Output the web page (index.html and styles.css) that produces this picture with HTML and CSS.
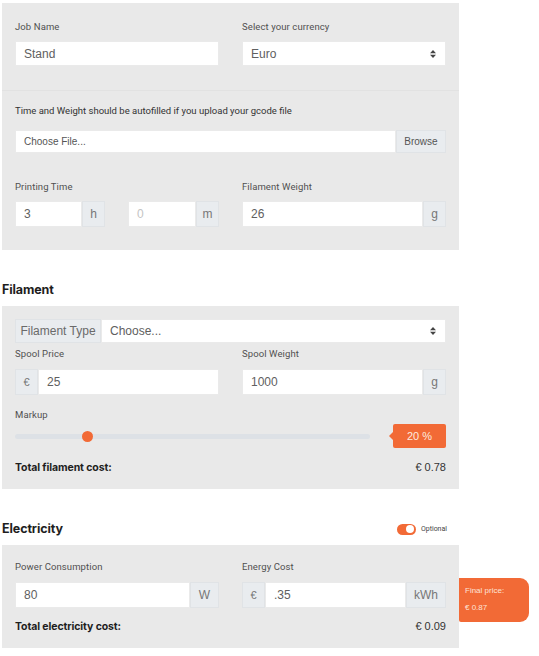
FILE: index.html
```html
<!DOCTYPE html>
<html>
<head>
<meta charset="utf-8">
<link rel="stylesheet" href="styles.css">
</head>
<body>
<div class="panel panel-job">
  <div class="section sec-top">
    <div class="cols">
      <div class="field">
        <div class="label">Job Name</div>
        <div class="input"><span class="val">Stand</span></div>
      </div>
      <div class="field">
        <div class="label">Select your currency</div>
        <div class="input select"><span class="val">Euro</span>
          <svg class="arrows" width="6" height="8" viewBox="0 0 6 8"><path d="M0 3.3L3 0L6 3.3Z M0 4.7L3 8L6 4.7Z" fill="#444"/></svg>
        </div>
      </div>
    </div>
  </div>
  <div class="section sec-bottom">
    <div class="note">Time and Weight should be autofilled if you upload your gcode file</div>
    <div class="group file">
      <div class="input grow"><span class="val small">Choose File...</span></div>
      <div class="addon browse">Browse</div>
    </div>
    <div class="cols cols-time">
      <div class="field">
        <div class="label">Printing Time</div>
        <div class="time-pair">
          <div class="group">
            <div class="input grow"><span class="val">3</span></div>
            <div class="addon unit">h</div>
          </div>
          <div class="group">
            <div class="input grow"><span class="val placeholder">0</span></div>
            <div class="addon unit">m</div>
          </div>
        </div>
      </div>
      <div class="field">
        <div class="label">Filament Weight</div>
        <div class="group">
          <div class="input grow"><span class="val">26</span></div>
          <div class="addon unit">g</div>
        </div>
      </div>
    </div>
  </div>
</div>

<div class="heading-row heading-fil"><h2 class="heading">Filament</h2></div>
<div class="panel panel-fil">
  <div class="group type-group">
    <div class="addon type-addon">Filament Type</div>
    <div class="input grow select"><span class="val">Choose...</span>
      <svg class="arrows" width="6" height="8" viewBox="0 0 6 8"><path d="M0 3.3L3 0L6 3.3Z M0 4.7L3 8L6 4.7Z" fill="#444"/></svg>
    </div>
  </div>
  <div class="cols cols-spool">
    <div class="field">
      <div class="label">Spool Price</div>
      <div class="group tall">
        <div class="addon cur">€</div>
        <div class="input grow"><span class="val">25</span></div>
      </div>
    </div>
    <div class="field">
      <div class="label">Spool Weight</div>
      <div class="group tall">
        <div class="input grow"><span class="val">1000</span></div>
        <div class="addon unit">g</div>
      </div>
    </div>
  </div>
  <div class="label markup-label">Markup</div>
  <div class="slider-row">
    <div class="track"><div class="thumb" style="left: 20.5%"></div></div>
    <div class="badge">20 %</div>
  </div>
  <div class="total-row">
    <span class="total-label">Total filament cost:</span>
    <span class="total-val">€ 0.78</span>
  </div>
</div>

<div class="heading-row heading-el">
  <h2 class="heading">Electricity</h2>
  <div class="toggle-wrap"><span class="toggle"><span class="knob"></span></span><span class="opt">Optional</span></div>
</div>
<div class="panel panel-el">
  <div class="cols">
    <div class="field">
      <div class="label">Power Consumption</div>
      <div class="group tall">
        <div class="input grow"><span class="val">80</span></div>
        <div class="addon watt">W</div>
      </div>
    </div>
    <div class="field">
      <div class="label">Energy Cost</div>
      <div class="group tall">
        <div class="addon cur">€</div>
        <div class="input grow"><span class="val">.35</span></div>
        <div class="addon kwh">kWh</div>
      </div>
    </div>
  </div>
  <div class="total-row el-total">
    <span class="total-label">Total electricity cost:</span>
    <span class="total-val">€ 0.09</span>
  </div>
  <div class="final">
    <div class="final-t">Final price:</div>
    <div class="final-v">€ 0.87</div>
  </div>
</div>
</body>
</html>
```

FILE: styles.css
```css
html, body { margin: 0; padding: 0; background: #fff; }
body {
  font-family: Roboto, "Liberation Sans", Arial, sans-serif;
  color: #444;
  width: 539px;
  height: 656px;
  overflow: hidden;
}
.panel {
  background: #e9e9e9;
  margin-left: 2px;
  width: 457px;
  box-sizing: border-box;
  position: relative;
}
.panel-job { margin-top: 3px; }
.section { padding: 0 13px; }
.sec-top {
  padding-top: 17px;
  padding-bottom: 24px;
  border-bottom: 1px solid #e2e2e2;
}
.sec-bottom { padding-top: 13px; padding-bottom: 23px; }
.cols {
  display: grid;
  grid-template-columns: 204px 204px;
  column-gap: 23px;
}
.label {
  font-size: 9.5px;
  line-height: 14px;
  color: #505050;
  letter-spacing: 0.1px;
  margin-bottom: 7px;
}
.input {
  background: #fff;
  height: 25px;
  box-sizing: border-box;
  border: 1px solid #eaeaea;
  display: flex;
  align-items: center;
  padding-left: 8px;
  padding-right: 9px;
  font-family: "Liberation Sans", Arial, sans-serif;
  font-size: 12px;
  color: #606060;
}
.val.small { font-size: 10px; color: #555; }
.val.placeholder { color: #c4c4c4; }
.select { justify-content: space-between; }
.arrows { display: block; }
.note {
  font-size: 9.5px;
  line-height: 14px;
  color: #333;
  margin-bottom: 12px;
}
.group { display: flex; height: 23px; }
.group .input { height: 100%; }
.grow { flex: 1; min-width: 0; }
.addon {
  background: #e9ecef;
  border: 1px solid #e0e3e6;
  box-sizing: border-box;
  height: 100%;
  display: flex;
  align-items: center;
  justify-content: center;
  font-family: "Liberation Sans", Arial, sans-serif;
  font-size: 12px;
  color: #777;
}
.browse { width: 50px; font-size: 10px; color: #555; }
.file { margin-bottom: 27px; }
.file .input { padding-left: 8px; }
.cols-time .group { height: 26px; }
.time-pair {
  display: grid;
  grid-template-columns: 90px 91px;
  column-gap: 23px;
}
.unit { width: 23px; }

.heading-row {
  display: flex;
  align-items: center;
  justify-content: space-between;
  width: 459px;
  box-sizing: border-box;
  padding-left: 2px;
  padding-right: 11px;
  height: 16px;
  margin-bottom: 8px;
}
.heading-fil { margin-top: 32px; }
.heading-el { margin-top: 32px; }
.heading {
  margin: 0;
  font-family: Inter, "Liberation Sans", sans-serif;
  font-weight: 700;
  font-size: 12.5px;
  line-height: 16px;
  color: #1e1e1e;
  letter-spacing: -0.1px;
}
.panel-fil { padding: 13px 13px 15px; }
.type-group { height: 24px; }
.type-addon { width: 86px; font-size: 12px; color: #6a6a6a; }
.type-group .input { padding-left: 8px; }
.cols-spool { margin-top: 4px; }
.cols-spool .label { margin-bottom: 8px; }
.tall { height: 26px; }
.cur { width: 23px; font-size: 11px; }
.markup-label { margin-top: 13px; margin-bottom: 2px; }
.slider-row {
  display: flex;
  align-items: center;
  height: 24px;
}
.track {
  width: 355px;
  height: 5px;
  background: #dde1e6;
  border-radius: 3px;
  position: relative;
}
.thumb {
  position: absolute;
  top: 50%;
  width: 11px;
  height: 11px;
  margin-left: -5.5px;
  margin-top: -5.5px;
  border-radius: 50%;
  background: #f26a36;
}
.badge {
  margin-left: 23px;
  width: 53px;
  height: 24px;
  background: #f26a36;
  border-radius: 2px;
  color: #fde9df;
  font-family: "Liberation Sans", Arial, sans-serif;
  font-size: 11px;
  display: flex;
  align-items: center;
  justify-content: center;
  position: relative;
}
.badge::before {
  content: "";
  position: absolute;
  left: -4px;
  top: 50%;
  margin-top: -4px;
  border-top: 4px solid transparent;
  border-bottom: 4px solid transparent;
  border-right: 4px solid #f26a36;
}
.total-row {
  display: flex;
  justify-content: space-between;
  align-items: center;
  height: 14px;
  margin-top: 12px;
}
.total-label {
  font-family: Inter, "Liberation Sans", sans-serif;
  font-weight: 700;
  font-size: 10.5px;
  color: #1e1e1e;
  letter-spacing: -0.1px;
}
.total-val {
  font-family: "Liberation Sans", Arial, sans-serif;
  font-size: 11px;
  color: #333;
}
.toggle-wrap { display: flex; align-items: center; margin-right: 1px; }
.toggle {
  width: 19px;
  height: 11px;
  border-radius: 6px;
  background: #f26a36;
  position: relative;
  display: inline-block;
}
.knob {
  position: absolute;
  right: 1.5px;
  top: 1.5px;
  width: 8px;
  height: 8px;
  border-radius: 50%;
  background: #fff;
}
.opt {
  font-size: 7px;
  color: #444;
  margin-left: 5px;
}
.panel-el { padding: 15px 13px 15px; }
.panel-el .label { margin-bottom: 8px; }
.watt { width: 29px; }
.kwh { width: 40px; }
.el-total { margin-top: 11px; }
.final {
  position: absolute;
  left: 457px;
  top: 33px;
  width: 70px;
  height: 44px;
  box-sizing: border-box;
  background: #f26a36;
  border-radius: 0 9px 9px 2px;
  padding: 8px 0 0 6px;
  color: #fde3d6;
  font-family: "Liberation Sans", Arial, sans-serif;
  font-size: 8px;
}
.final-t { line-height: 9px; }
.final-v { line-height: 9px; margin-top: 8px; }
```
